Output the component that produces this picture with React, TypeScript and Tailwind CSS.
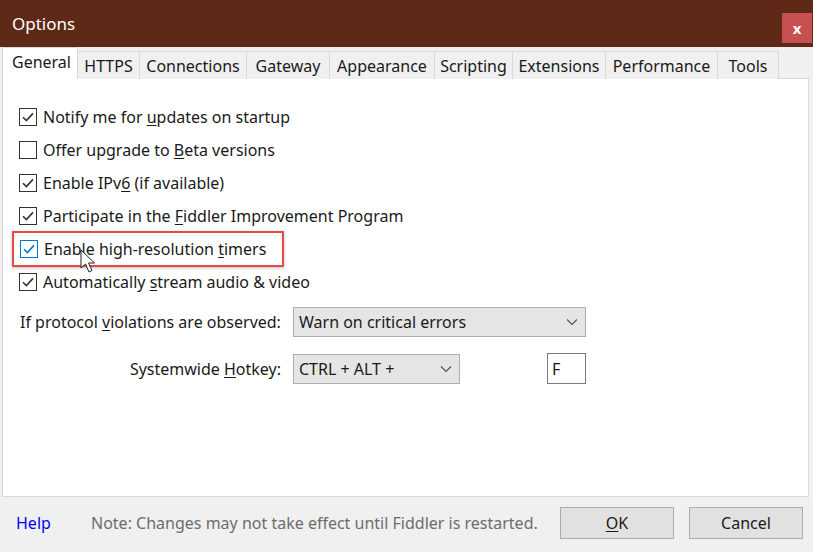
import React from 'react';

const font = { fontFamily: '"Noto Sans", "Open Sans", sans-serif' };

function Check({ checked, focus }: { checked?: boolean; focus?: boolean }) {
  return (
    <span
      className={
        'flex h-[18px] w-[18px] shrink-0 items-center justify-center border bg-white ' +
        (focus ? 'border-[#0078d7]' : 'border-[#333333]')
      }
    >
      {checked && (
        <svg width="14" height="14" viewBox="0 0 14 14">
          <path d="M2 7.2 L5.4 10.6 L12 3.4" fill="none" stroke={focus ? '#0078d7' : '#333333'} strokeWidth="1.6" />
        </svg>
      )}
    </span>
  );
}

function Chevron() {
  return (
    <svg width="12" height="8" viewBox="0 0 12 8">
      <path d="M1 1.5 L6 6.5 L11 1.5" fill="none" stroke="#555" strokeWidth="1.2" />
    </svg>
  );
}

const tabs = ['HTTPS', 'Connections', 'Gateway', 'Appearance', 'Scripting', 'Extensions', 'Performance', 'Tools'];
const tabWidths = ['w-[62px]', 'w-[107px]', 'w-[83px]', 'w-[105px]', 'w-[78px]', 'w-[93px]', 'w-[112px]', 'w-[61px]'];

export default function App() {
  const rows: { node: React.ReactNode; checked: boolean }[] = [
    { node: <>Notify me for <u className="underline-offset-2">u</u>pdates on startup</>, checked: true },
    { node: <>Offer upgrade to <u className="underline-offset-2">B</u>eta versions</>, checked: false },
    { node: <>Enable IPv<u className="underline-offset-2">6</u> (if available)</>, checked: true },
    { node: <>Participate in the <u className="underline-offset-2">F</u>iddler Improvement Program</>, checked: true },
  ];

  return (
    <div className="flex h-[552px] w-[813px] flex-col overflow-hidden bg-[#f0f0f0] text-[#1a1a1a]" style={font}>
      {/* Title bar */}
      <div className="flex h-[47px] shrink-0 items-start justify-between bg-[#5e2a17]">
        <span className="pl-[12px] pt-[11px] text-[17px] text-white">Options</span>
        <button className="mr-[1px] mt-[13px] flex h-[30px] w-[30px] items-center justify-center bg-[#c75050] text-[15px] font-bold leading-none text-white">
          x
        </button>
      </div>

      {/* Tabs */}
      <div className="relative z-10 flex h-[32px] shrink-0 items-end pl-[2px]">
        <div className="flex h-[32px] w-[76px] items-start border-x border-t border-[#d9d9d9] bg-white pl-[9px] pt-[2px] text-[16px]">
          General
        </div>
        {tabs.map((t, i) => (
          <div
            key={t}
            className={
              'flex h-[28px] items-center justify-center border-r border-t border-[#d9d9d9] bg-[#f0f0f0] text-[16px] ' +
              tabWidths[i]
            }
          >
            {t}
          </div>
        ))}
      </div>

      {/* Panel */}
      <div className="-mt-[1px] ml-[2px] mr-[4px] flex h-[419px] shrink-0 flex-col border border-[#d9d9d9] bg-white pt-[21px] text-[16px]">
        <div className="flex flex-col">
          {rows.map((r, i) => (
            <div key={i} className="flex h-[33px] items-center gap-[6px] pl-[16px]">
              <Check checked={r.checked} />
              <span>{r.node}</span>
            </div>
          ))}
          <div className="flex h-[33px] items-center pl-[9px]">
            <div className="relative flex h-[36px] w-[272px] items-center gap-[6px] border-2 border-[#e84848] pl-[6px] shadow-[0_1px_3px_rgba(0,0,0,0.25)]">
              <Check checked focus />
              <span>
                Enable high-resolution <u className="underline-offset-2">t</u>imers
              </span>
              <svg className="absolute left-[66px] top-[16px]" width="18" height="26" viewBox="0 0 18 26">
                <path d="M1 1 L1 19 L5.5 15 L9 23 L12 21.5 L8.5 14 L14.5 14 Z" fill="white" stroke="#222" strokeWidth="1" />
              </svg>
            </div>
          </div>
          <div className="flex h-[33px] items-center gap-[6px] pl-[16px]">
            <Check checked />
            <span>
              Automatically <u className="underline-offset-2">s</u>tream audio &amp; video
            </span>
          </div>
        </div>

        <div className="mt-[9px] flex items-center">
          <span className="w-[290px] pl-[17px]">
            If protocol <u className="underline-offset-2">v</u>iolations are observed:
          </span>
          <div className="flex h-[30px] w-[293px] items-center justify-between border border-[#adadad] bg-[#e5e5e5] pl-[5px] pr-[7px]">
            <span>Warn on critical errors</span>
            <Chevron />
          </div>
        </div>

        <div className="mt-[16px] flex items-center">
          <span className="w-[290px] pr-[12px] text-right">
            Systemwide <u className="underline-offset-2">H</u>otkey:
          </span>
          <div className="flex h-[30px] w-[167px] items-center justify-between border border-[#adadad] bg-[#e5e5e5] pl-[5px] pr-[7px]">
            <span>CTRL + ALT +</span>
            <Chevron />
          </div>
          <div className="ml-[87px] flex h-[31px] w-[39px] items-center border border-[#7a7a7a] bg-white pl-[4px]">
            F
          </div>
        </div>
      </div>

      {/* Footer */}
      <div className="flex flex-1 items-center pb-[4px] text-[16px]">
        <span className="w-[75px] pl-[16px] text-[#0000ee]">Help</span>
        <span className="w-[469px] pl-[16px] text-[#6d6d6d]">
          Note: Changes may not take effect until Fiddler is restarted.
        </span>
        <button className="ml-[16px] flex h-[32px] w-[114px] items-center justify-center border border-[#adadad] bg-[#e1e1e1]">
          <span>
            <u className="underline-offset-2">O</u>K
          </span>
        </button>
        <button className="ml-[15px] flex h-[32px] w-[114px] items-center justify-center border border-[#adadad] bg-[#e1e1e1]">
          Cancel
        </button>
      </div>
    </div>
  );
}
